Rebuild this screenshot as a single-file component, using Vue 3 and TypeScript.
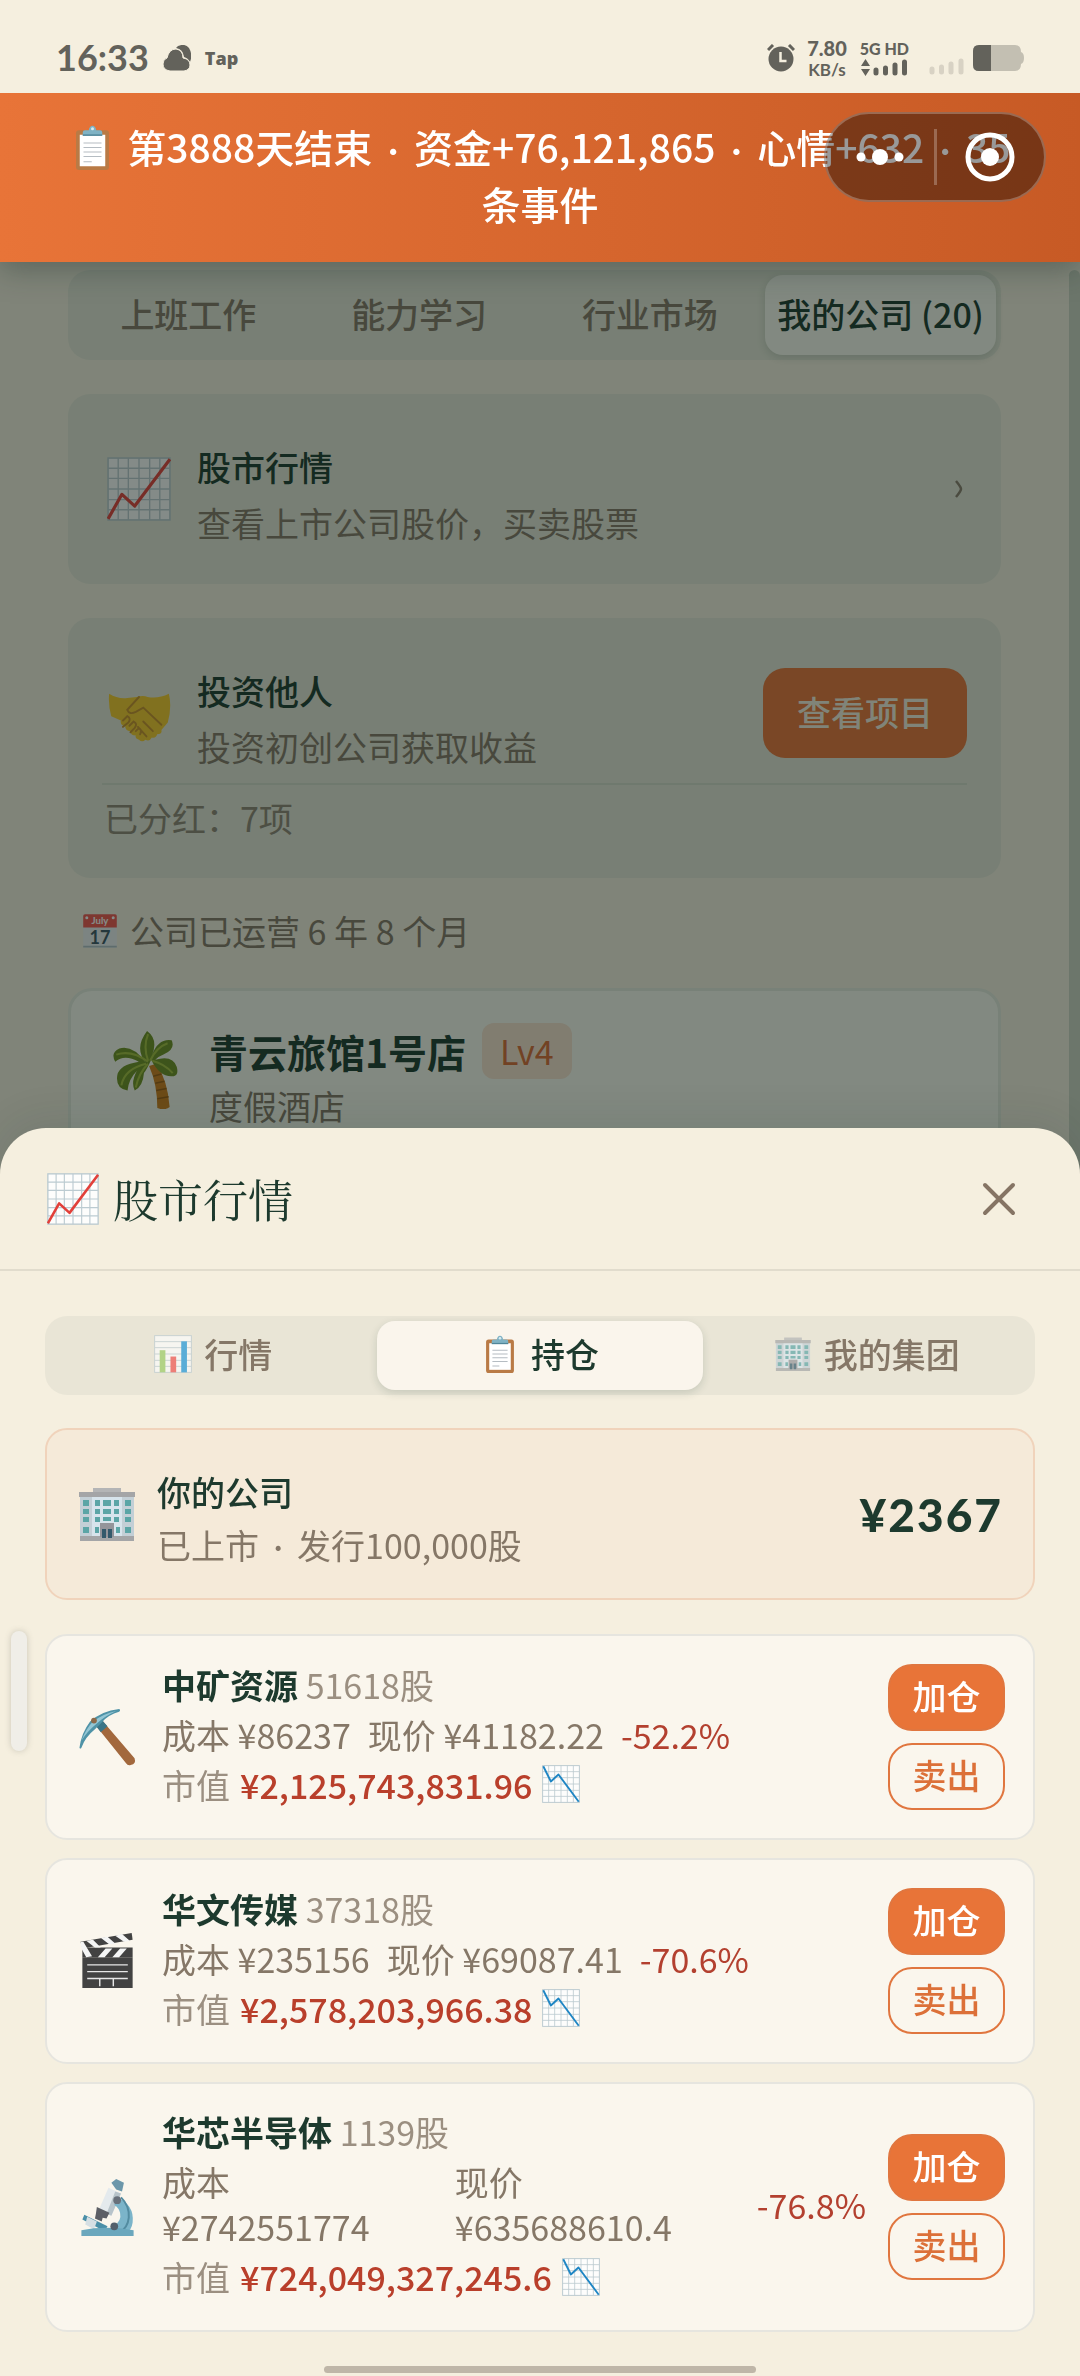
<script setup lang="ts">
import { ref } from 'vue'

interface Holding {
  name: string
  icon: string
  shares: string
  cost: string
  price: string
  change: string
  value: string
}

const pageTabs = ['上班工作', '能力学习', '行业市场', '我的公司 (20)']
const activePageTab = ref(3)

const sheetTabs = [
  { icon: 'i-bars', label: '行情' },
  { icon: 'i-clip', label: '持仓' },
  { icon: 'i-office', label: '我的集团' },
]
const activeSheetTab = ref(1)

const holdings: Holding[] = [
  { name: '中矿资源', icon: 'i-pick', shares: '51618股', cost: '¥86237', price: '¥41182.22', change: '-52.2%', value: '¥2,125,743,831.96' },
  { name: '华文传媒', icon: 'i-clapper', shares: '37318股', cost: '¥235156', price: '¥69087.41', change: '-70.6%', value: '¥2,578,203,966.38' },
  { name: '华芯半导体', icon: 'i-scope', shares: '1139股', cost: '¥2742551774', price: '¥635688610.4', change: '-76.8%', value: '¥724,049,327,245.6' },
]
</script>

<template>
  <svg class="sprite" aria-hidden="true">
    <symbol id="i-grid" viewBox="0 0 60 60">
      <rect x="1" y="1" width="58" height="58" fill="#fdfdfc" stroke="#b9c9cf" stroke-width="1.5" />
      <path d="M10.500 1v58M20 1v58M30 1v58M40 1v58M49.500 1v58M1 10.500h58M1 20h58M1 30h58M1 40h58M1 49.500h58" stroke="#bccbd1" stroke-width="1.300" />
    </symbol>
    <symbol id="i-up" viewBox="0 0 60 60">
      <use href="#i-grid" />
      <path d="M1 58 14 35 26 46 59 2" fill="none" stroke="#e2403a" stroke-width="3" stroke-linejoin="round" />
    </symbol>
    <symbol id="i-down" viewBox="0 0 60 60">
      <use href="#i-grid" />
      <path d="M2 2 14 26 26 15 58 58" fill="none" stroke="#1f86c4" stroke-width="3" stroke-linejoin="round" />
    </symbol>
    <symbol id="i-bars" viewBox="0 0 60 60">
      <rect x="1" y="1" width="58" height="58" fill="#fcfcfb" stroke="#b9c9cf" stroke-width="1.500" />
      <path d="M1 10.500h58M1 20h58M1 30h58M1 40h58M1 49.500h58" stroke="#bccbd1" stroke-width="1.500" />
      <path d="M9 24h9v35H9z" fill="#9ccc65" />
      <path d="M26 34h9v25h-9z" fill="#ef5350" />
      <path d="M43 10h9v49h-9z" fill="#1e96d8" />
    </symbol>
    <symbol id="i-clip" viewBox="0 0 60 60">
      <rect x="8" y="7" width="44" height="53" rx="4" fill="#b97a45" />
      <path d="M13 13h34v42H13z" fill="#fff" />
      <path d="M18 24h24M18 30h24M18 36h24M18 42h24M18 49h11" stroke="#b5bcc2" stroke-width="1.600" />
      <path d="M17 14v-4q0-3 3-3h5q1-6 5-6t5 6h5q3 0 3 3v4z" fill="#7fb2c4" />
      <circle cx="30" cy="5" r="2" fill="#d9ecf2" />
      <path d="M17 13.500h26" stroke="#4f8699" stroke-width="2" />
    </symbol>
    <symbol id="i-office" viewBox="0 0 60 60">
      <path d="M16 4h28v8H16z" fill="#b4b5b6" />
      <path d="M3 9h54v44H3z" fill="#c3cfd6" />
      <path d="M15 9h30v44H15z" fill="#d7e4ec" />
      <path d="M2 8h56v5H2zM3 52h54v5H3z" fill="#a4a5a7" />
      <g fill="#5ba5a6">
        <path d="M6 16h6v6H6zM18 16h5v6h-5zM26 16h8v6h-8zM37 16h5v6h-5zM48 16h6v6h-6z" />
        <path d="M6 25h6v5H6zM18 25h5v5h-5zM26 25h8v5h-8zM37 25h5v5h-5zM48 25h6v5h-6z" />
        <path d="M6 33h6v5H6zM18 33h5v5h-5zM26 33h8v4h-8zM37 33h5v5h-5zM48 33h6v5h-6z" />
        <path d="M6 43h6v6H6zM18 43h4v6h-4zM39 43h4v6h-4zM48 43h6v6h-6z" />
      </g>
      <path d="M23 39h14v14H23z" fill="#94949a" />
      <path d="M25 45h4v9h-4zM31 45h4v9h-4z" fill="#33596b" />
    </symbol>
    <symbol id="i-hands" viewBox="0 0 60 60">
      <path d="M2 12q8 5 17 4l9-1q6-2 10 0 10 2 20-3 3 12-1 27l-6 7q1 4-4 4-1 4-5 3-2 4-6 2-3 3-6 0-4-1-3-4-5 0-5-4-5 0-5-5-5 0-4-5L4 33Q1 22 2 12z" fill="#f7c92b" />
      <path d="M30 15 19 27q2 5 8 2l7-4 17 16M43 47l-9-9M37 52l-8-9M15 37l4-4q4 2 1 6l-5 4M21 42l4-4q4 2 1 6l-4 4M27 47l3-3q3 2 1 6" fill="none" stroke="#c9902b" stroke-width="1.800" stroke-linecap="round" />
    </symbol>
    <symbol id="i-palm" viewBox="0 0 66 76">
      <path d="M37 34q8 18 8 41 7 3 12-1-2-26-13-42z" fill="#cf7d1c" />
      <path d="M41 44l8-2M43 51l9-2M44 58l10-2M45 66l11-2" stroke="#9b5c12" stroke-width="1.500" />
      <path d="M34 31Q22 17 35 0q11 8 5 23Q46 7 59 9q4 9-8 14-5 2-8 5 17-5 21 7 2 8-3 9-13 2-22-16-4 9-7 13-1 13-9 17-4-8 2-19-8 8-9 19Q4 56 6 43q2-10 21-13Q13 22 4 30-1 21 8 17q13-4 26 14z" fill="#6f8f22" />
      <path d="M36 29Q31 15 36 3M36 30Q20 18 5 23M34 32Q13 37 10 53M36 32Q27 41 24 55M38 29q6-13 17-17M40 29q12 3 20 12" fill="none" stroke="#a3bd3d" stroke-width="2" />
    </symbol>
    <symbol id="i-pick" viewBox="0 0 60 60">
      <path d="m17 17 6-6 35 41q2 6-4 7-3 1-5-2z" fill="#a2683d" />
      <path d="m17 17 6-6 7 8-7 6z" fill="#3a7587" />
      <path d="M1 41Q3 26 12 14 24 3 42 1q2 1 0 3-11 3-18 11l-7 7Q7 30 3 41q-1 2-2 0z" fill="#4f93a7" />
      <path d="M3 34Q8 21 15 14q10-8 24-11-13 6-20 13Q9 24 3 34z" fill="#94c6d4" />
      <circle cx="16" cy="13" r="3" fill="#8c6a4a" />
    </symbol>
    <symbol id="i-clapper" viewBox="0 0 60 60">
      <path d="M4 26h52v32H4z" fill="#424242" />
      <path d="M4 16h52v10H4z" fill="#424242" />
      <path d="M2 10 55 1l1 7-52 9z" fill="#424242" />
      <path d="m8 9 9 7h6l-8-8zM23 6l9 7 6-1-8-7zM38 4l9 6 6-1-8-7zM20 26l8-9h7l-8 9zM35 26l8-9h7l-8 9zM2 10l3 0 9 15-6 1-5-9z" fill="#f4f5f5" />
      <path d="M9 34h42M9 41h42M9 48h42M22 48v8M36 48v8" stroke="#e6e6e6" stroke-width="1.500" />
    </symbol>
    <symbol id="i-scope" viewBox="0 0 60 60">
      <path d="m34 5 5-4 8 4-2 9-6-2z" fill="#6c97aa" />
      <path d="m31 10 13 6-10 23-13-6z" fill="#e4eaed" />
      <path d="m38 14 6 2-10 23-5-2z" fill="#b8c4ca" />
      <path d="M19 30l13 6-3 6-4-1-1 4-7-3 1-5z" fill="#5c5f66" />
      <path d="M40 20q18 8 16 26-1 7-6 11H36v-7q9-5 7-14-1-5-6-8z" fill="#7bb4c9" />
      <path d="M44 20q9 9 8 21-1 10-9 15" fill="none" stroke="#528ba0" stroke-width="2" />
      <path d="m6 38 24 12-3 5L4 43z" fill="#4a8fa8" />
      <path d="m9 40 10 5-3 8-9-5z" fill="#d5dfe4" />
      <path d="M3 54q25-5 54 0v6H3z" fill="#6aa7bd" />
      <circle cx="40" cy="23" r="4" fill="#68707a" />
      <circle cx="37" cy="50" r="4" fill="#53606b" />
    </symbol>
  </svg>

  <div class="app">
    <header class="status">
      <div class="status-left">
        <span class="clock">16:33</span>
        <svg class="cloud" viewBox="0 0 28 26">
          <path d="M15 1q7-3 11 2 4 7 1 14-2-4-6-5-1-8-8-9z" fill="#63625b" />
          <path d="M7 26q-7-1-7-7 0-5 4-6 2-9 9-9 7 1 7 9 7 1 7 7 0 5-6 6z" fill="#63625b" stroke="#f5efdf" stroke-width="1" />
        </svg>
        <span class="tap">Tap</span>
      </div>
      <div class="status-right">
        <svg class="alarm" viewBox="0 0 28 28">
          <circle cx="14" cy="15" r="12.500" fill="#63625b" />
          <path d="M1 6l5-5M27 6l-5-5" stroke="#63625b" stroke-width="3" />
          <path d="M13.500 8v9h6" fill="none" stroke="#f5efdf" stroke-width="2.500" />
        </svg>
        <div class="speed"><b>7.80</b><span>KB/s</span></div>
        <div class="cell">
          <b>5G HD</b>
          <svg viewBox="0 0 46 17">
            <path d="M0 7 4.500 0 9 7zM0 10l4.500 7L9 10z" fill="#63625b" />
            <path d="M15 11v3M24.500 9v5M34 6v8M43.500 3v11" stroke="#63625b" stroke-width="5" stroke-linecap="round" />
          </svg>
        </div>
        <svg class="weak" viewBox="0 0 36 17">
          <path d="M3 11v3M12.500 9v5M22 6v8M32 3v11" stroke="#d8d2c4" stroke-width="5" stroke-linecap="round" />
        </svg>
        <svg class="battery" viewBox="0 0 51 26">
          <path d="M6 0h36q6 0 6 7 3 1 3 6t-3 6q0 7-6 7H6q-6 0-6-6V6q0-6 6-6z" fill="#c3bfb2" />
          <path d="M18 0H6Q0 0 0 6v14q0 6 6 6h12z" fill="#63625b" />
        </svg>
      </div>
    </header>

    <div class="banner">
      <p><svg class="banner-icon"><use href="#i-clip" /></svg> 第3888天结束 <span class="dot">·</span> 资金+76,121,865 <span class="dot">·</span> 心情+632 <span class="dot">·</span> 35条事件</p>
      <div class="capsule">
        <button class="cap-btn" aria-label="更多">
          <svg width="48" height="48" viewBox="0 0 48 48" fill="#fff"><circle cx="5" cy="24" r="4.500" /><circle cx="24" cy="24" r="8" /><circle cx="43" cy="24" r="4.500" /></svg>
        </button>
        <span class="cap-line"></span>
        <button class="cap-btn" aria-label="关闭小程序">
          <svg width="50" height="50" viewBox="0 0 50 50"><circle cx="25" cy="25" r="22" fill="none" stroke="#fff" stroke-width="5" /><circle cx="25" cy="25" r="9" fill="#fff" /></svg>
        </button>
      </div>
    </div>

    <main class="page">
      <div class="content">
        <nav class="seg page-seg">
          <button v-for="(t, i) in pageTabs" :key="t" :class="{ on: i === activePageTab }" @click="activePageTab = i">{{ t }}</button>
        </nav>

        <section class="tile">
          <div class="tile-row">
            <svg class="tile-icon"><use href="#i-up" /></svg>
            <div class="tile-text">
              <h3>股市行情</h3>
              <p>查看上市公司股价，买卖股票</p>
            </div>
            <svg class="chevron" viewBox="0 0 8 18"><path d="M1 1q5 6 5 8t-5 8" fill="none" stroke="#8a7d6d" stroke-width="2.500" /></svg>
          </div>
        </section>

        <section class="tile">
          <div class="tile-row">
            <svg class="tile-icon"><use href="#i-hands" /></svg>
            <div class="tile-text">
              <h3>投资他人</h3>
              <p>投资初创公司获取收益</p>
            </div>
            <button class="view-btn">查看项目</button>
          </div>
          <p class="dividend">已分红：7项</p>
        </section>

        <p class="age">
          <svg class="age-icon" viewBox="0 0 60 60">
            <rect x="2" y="2" width="56" height="56" rx="3" fill="#eceff1" />
            <path d="M2 24V5q0-3 3-3h50q3 0 3 3v19z" fill="#f0554d" />
            <path d="M2 56h56" stroke="#b0bec5" stroke-width="3" />
            <circle cx="8" cy="8" r="2.500" fill="#fff" />
            <circle cx="52" cy="8" r="2.500" fill="#fff" />
            <text x="30" y="19" text-anchor="middle" font-family="Lato, sans-serif" font-size="16" font-weight="700" fill="#fff">July</text>
            <text x="30" y="52" text-anchor="middle" font-family="Lato, sans-serif" font-size="30" font-weight="700" fill="#3d5565">17</text>
          </svg>公司已运营 6 年 8 个月
        </p>

        <section class="company">
          <svg class="palm"><use href="#i-palm" /></svg>
          <div>
            <div class="company-head"><h2>青云旅馆1号店</h2><span class="level">Lv4</span></div>
            <p>度假酒店</p>
          </div>
        </section>
      </div>
      <div class="scroll"></div>
    </main>

    <div class="overlay">
      <section class="sheet" role="dialog" aria-label="股市行情">
        <header class="sheet-head">
          <svg class="head-icon"><use href="#i-up" /></svg>
          <h1>股市行情</h1>
          <button class="close" aria-label="关闭">
            <svg width="34" height="34" viewBox="0 0 34 34"><path d="M3 3l28 28M31 3 3 31" stroke="#857464" stroke-width="4" stroke-linecap="round" /></svg>
          </button>
        </header>
        <div class="sheet-body">
          <nav class="seg sheet-seg">
            <button v-for="(t, i) in sheetTabs" :key="t.label" :class="{ on: i === activeSheetTab }" @click="activeSheetTab = i">
              <svg class="seg-icon"><use :href="'#' + t.icon" /></svg>{{ t.label }}
            </button>
          </nav>

          <section class="own">
            <svg class="own-icon"><use href="#i-office" /></svg>
            <div class="own-text">
              <h3>你的公司</h3>
              <p>已上市 <span class="dot">·</span> 发行100,000股</p>
            </div>
            <strong>¥2367</strong>
          </section>

          <ul class="list">
            <li v-for="h in holdings" :key="h.name" class="holding">
              <svg class="hold-icon"><use :href="'#' + h.icon" /></svg>
              <div class="hold-text">
                <div class="hold-title"><b>{{ h.name }}</b> <span>{{ h.shares }}</span></div>
                <div class="hold-prices">
                  <span>成本 {{ h.cost }}</span>
                  <span>现价 {{ h.price }}</span>
                  <span class="change">{{ h.change }}</span>
                </div>
                <div class="hold-value"><span>市值</span><b>{{ h.value }}</b><svg class="trend"><use href="#i-down" /></svg></div>
              </div>
              <div class="actions">
                <button class="buy">加仓</button>
                <button class="sell">卖出</button>
              </div>
            </li>
          </ul>
        </div>
      </section>
      <span class="edge-handle"></span>
      <span class="home-bar"></span>
    </div>
  </div>
</template>

<style>
body {
  margin: 0;
  background: #f5efdf;
}
</style>

<style scoped>
* {
  box-sizing: border-box;
}
h1, h2, h3, p, ul {
  margin: 0;
  padding: 0;
}
button {
  font: inherit;
  color: inherit;
  border: 0;
  padding: 0;
  background: none;
  white-space: nowrap;
}
svg {
  display: block;
  flex: none;
}
.sprite {
  position: absolute;
  width: 0;
  height: 0;
}
.app {
  min-height: 100vh;
  display: flex;
  flex-direction: column;
  font-family: "Noto Sans CJK SC", sans-serif;
  font-size: 34px;
  line-height: 45px;
  color: #857767;
}
.dot {
  margin: 0 7px;
  font-family: Lato, sans-serif;
  line-height: 1;
}

/* status bar */
.status {
  position: relative;
  z-index: 4;
  height: 93px;
  padding: 22px 56px 0 56px;
  display: flex;
  align-items: center;
  justify-content: space-between;
  background: #f5efdf;
  color: #63625b;
}
.status-left, .status-right {
  display: flex;
  align-items: center;
}
.clock {
  font-family: Lato, sans-serif;
  font-size: 36px;
  font-weight: 700;
}
.cloud {
  width: 28px;
  height: 26px;
  margin-left: 14px;
}
.tap {
  margin-left: 14px;
  font: 900 18px "Open Sans", sans-serif;
}
.alarm {
  width: 28px;
  height: 28px;
}
.speed, .cell {
  display: flex;
  flex-direction: column;
  align-items: center;
  font-family: Lato, sans-serif;
}
.speed {
  margin-left: 12px;
  font-size: 17px;
  line-height: 19px;
  font-weight: 700;
}
.speed b {
  font-size: 20px;
  line-height: 24px;
}
.cell {
  margin-left: 13px;
  font-size: 16px;
  line-height: 20px;
  font-weight: 900;
}
.cell svg {
  width: 46px;
  height: 17px;
}
.weak {
  width: 36px;
  height: 17px;
  margin: 18px 8px 0 20px;
}
.battery {
  width: 51px;
  height: 26px;
}

/* result banner */
.banner {
  position: relative;
  z-index: 3;
  padding: 25px 60px 30px;
  background: linear-gradient(90deg, #e87438, #c75a25);
  box-shadow: 0 8px 28px rgba(26, 46, 37, 0.35);
  color: #fff;
  font-size: 39px;
  font-weight: 500;
  line-height: 57px;
  text-align: center;
}
.banner-icon {
  display: inline-block;
  width: 45px;
  height: 45px;
  margin-right: 4px;
  vertical-align: -7px;
}
.capsule {
  position: absolute;
  top: 19px;
  right: 34px;
  width: 222px;
  height: 90px;
  display: flex;
  align-items: center;
  border: 2px solid rgba(255, 255, 255, 0.25);
  border-radius: 45px;
  background: rgba(0, 0, 0, 0.4);
}
.cap-btn {
  flex: 1;
  display: flex;
  justify-content: center;
}
.cap-line {
  width: 3px;
  height: 56px;
  background: rgba(255, 255, 255, 0.25);
}

/* page behind the sheet */
.page {
  display: flex;
  padding-top: 8px;
}
.content {
  flex: 1;
  min-width: 0;
  padding: 0 68px;
}
.scroll {
  width: 11px;
  border-radius: 6px;
  background: #cdd2c3;
}
.seg {
  display: flex;
  border-radius: 22px;
  background: #e9e5d6;
}
.seg button {
  flex: 1 1 0;
  display: flex;
  align-items: center;
  justify-content: center;
  padding-bottom: 4px;
  font-weight: 500;
  border-radius: 18px;
}
.seg .on {
  background: #faf5ec;
  color: #1d3a2e;
  box-shadow: 0 3px 8px rgba(26, 58, 46, 0.16);
}
.page-seg {
  padding: 5px;
  background: #e4e5d6;
}
.page-seg button {
  height: 80px;
}
.page-seg .on {
  background: #f9f9ee;
}
.tile {
  margin-top: 34px;
  padding: 38px 34px 38px;
  border-radius: 22px;
  background: #e4e5d6;
}
.tile-row {
  display: flex;
  align-items: center;
}
.tile-icon {
  width: 64px;
  height: 64px;
  margin: 0 26px 0 5px;
}
.tile-text {
  flex: 1;
  padding-top: 12px;
  line-height: 46px;
}
.tile-text h3 {
  font-size: 34px;
  font-weight: 500;
  color: #1d3a2e;
  margin-bottom: 10px;
}
.chevron {
  width: 8px;
  height: 18px;
  margin-right: 4px;
}
.view-btn {
  width: 204px;
  height: 90px;
  padding-bottom: 4px;
  border-radius: 22px;
  background: #e87438;
  color: #f5efdf;
  font-weight: 500;
}
.dividend {
  margin-top: 13px;
  padding: 10px 2px 0;
  border-top: 2px solid #d3d8c9;
  color: #8f8474;
}
.age {
  display: flex;
  align-items: center;
  gap: 12px;
  margin-top: 30px;
  padding-left: 14px;
}
.age-icon {
  width: 36px;
  height: 36px;
}
.company {
  display: flex;
  gap: 30px;
  margin-top: 35px;
  padding: 32px 34px 64px 40px;
  border: 3px solid #e4e8dc;
  border-radius: 24px;
  background: #f9f9ee;
}
.palm {
  width: 68px;
  height: 78px;
  margin-top: 8px;
}
.company-head {
  display: flex;
  align-items: center;
  gap: 16px;
}
.company h2 {
  font-size: 39px;
  line-height: 56px;
  font-weight: 700;
  color: #1d3a2e;
}
.level {
  padding: 0 18px;
  line-height: 56px;
  border-radius: 12px;
  background: #f6e0cd;
  color: #d96a34;
}
.company p {
  margin-top: 4px;
}

/* bottom sheet */
.overlay {
  position: fixed;
  inset: 0;
  z-index: 2;
  display: flex;
  flex-direction: column;
  justify-content: flex-end;
  background: rgba(12, 25, 19, 0.5);
}
.sheet {
  border-radius: 46px 46px 0 0;
  background: #f5efdf;
  box-shadow: 0 -8px 40px rgba(26, 46, 37, 0.1);
}
.sheet-head {
  display: flex;
  align-items: center;
  height: 143px;
  padding: 0 64px 0 47px;
  border-bottom: 2px solid #e1dccd;
}
.head-icon {
  width: 52px;
  height: 52px;
}
.sheet-head h1 {
  flex: 1;
  margin-left: 14px;
  font-family: "Noto Serif CJK SC", "Noto Sans CJK SC", serif;
  font-size: 45px;
  line-height: 60px;
  font-weight: 400;
  color: #1d3a2e;
}
.sheet-body {
  padding: 45px 45px 44px;
}
.sheet-seg {
  padding: 5px;
}
.sheet-seg button {
  height: 69px;
  gap: 12px;
}
.seg-icon {
  width: 38px;
  height: 38px;
  opacity: 0.7;
}
.on .seg-icon {
  opacity: 1;
}
.own {
  display: flex;
  align-items: center;
  gap: 20px;
  margin-top: 33px;
  padding: 31px 30px;
  border: 2px solid #f0d3bb;
  border-radius: 22px;
  background: #f5ead9;
}
.own-icon {
  width: 60px;
  height: 60px;
}
.own-text {
  flex: 1;
  padding-top: 8px;
}
.own h3 {
  margin-bottom: 8px;
  font-size: 34px;
  line-height: 45px;
  font-weight: 500;
  color: #1d3a2e;
}
.own strong {
  font-family: Lato, sans-serif;
  font-size: 46px;
  font-weight: 900;
  letter-spacing: 2px;
  color: #1d3a2e;
}
.list {
  display: flex;
  flex-direction: column;
  gap: 18px;
  margin-top: 34px;
  list-style: none;
}
.holding {
  display: flex;
  align-items: center;
  gap: 22px;
  padding: 28px;
  border: 2px solid #e6e5df;
  border-radius: 22px;
  background: #faf6ed;
}
.hold-icon {
  width: 65px;
  height: 58px;
}
.hold-text {
  flex: 1;
  min-width: 0;
  display: flex;
  flex-direction: column;
  gap: 5px;
  margin: -3px 0 3px;
}
.hold-title b {
  font-weight: 700;
  color: #1d3a2e;
}
.hold-title span, .hold-value span {
  color: #9b8f81;
}
.hold-prices {
  display: flex;
  align-items: center;
  gap: 17px;
}
.hold-prices .change {
  white-space: nowrap;
  color: #b3402f;
}
.hold-value {
  display: flex;
  align-items: center;
  gap: 10px;
}
.hold-value b {
  font-weight: 500;
  color: #b93f2b;
}
.trend {
  width: 38px;
  height: 38px;
}
.actions {
  display: flex;
  flex-direction: column;
  gap: 12px;
}
.actions button {
  width: 117px;
  height: 67px;
  padding-bottom: 4px;
  border: 2px solid #e0763f;
  border-radius: 24px;
  font-weight: 500;
}
.buy {
  background: #e87438;
  color: #fff;
}
.sell {
  color: #dc7038;
}
.edge-handle {
  position: absolute;
  left: 11px;
  bottom: 625px;
  width: 16px;
  height: 120px;
  border-radius: 8px;
  background: #f0eee8;
  box-shadow: 0 0 6px rgba(80, 80, 70, 0.25);
}
.home-bar {
  position: absolute;
  left: 30%;
  right: 30%;
  bottom: 3px;
  height: 7px;
  border-radius: 4px;
  background: #bfb6a8;
}
</style>
